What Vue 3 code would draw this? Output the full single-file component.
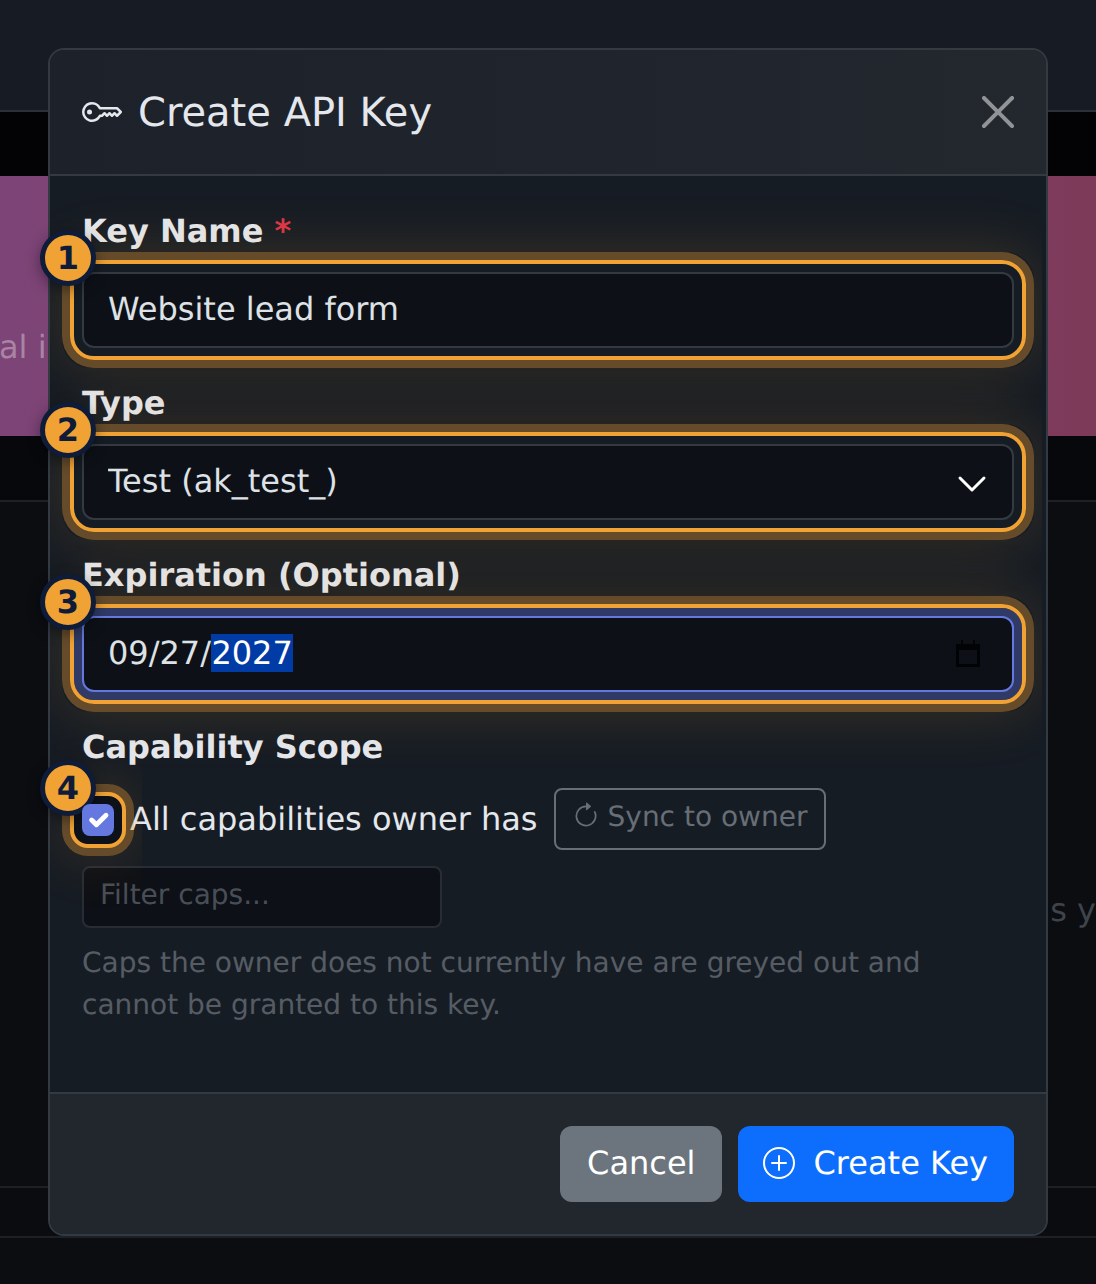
<template>
  <div class="page">
    <!-- Dimmed page behind the dialog -->
    <div class="bg-topbar"></div>
    <div class="bg-band"></div>
    <div class="bg-hero">
      <span>al i</span>
    </div>
    <div class="bg-band bg-band-low"></div>
    <div class="bg-content">
      <span>s y</span>
    </div>
    <div class="bg-row"></div>
    <div class="bg-bottom"></div>

    <div class="modal">
      <header class="modal-header">
        <h5 class="modal-title">
          <svg class="title-icon" viewBox="0 0 16 16" fill="currentColor">
            <path d="M0 8a4 4 0 0 1 7.465-2H14a.5.5 0 0 1 .354.146l1.5 1.5a.5.5 0 0 1 0 .708l-1.5 1.5a.5.5 0 0 1-.708 0L13 9.207l-.646.647a.5.5 0 0 1-.708 0L11 9.207l-.646.647a.5.5 0 0 1-.708 0L9 9.207l-.646.647A.5.5 0 0 1 8 10h-.535A4 4 0 0 1 0 8m4-3a3 3 0 1 0 2.712 4.285A.5.5 0 0 1 7.163 9h.63l.853-.854a.5.5 0 0 1 .708 0l.646.647.646-.647a.5.5 0 0 1 .708 0l.646.647.646-.647a.5.5 0 0 1 .708 0l.646.647.793-.793-1-1h-6.63a.5.5 0 0 1-.451-.285A3 3 0 0 0 4 5" />
            <path d="M4 8a1 1 0 1 1-2 0 1 1 0 0 1 2 0" />
          </svg>
          Create API Key
        </h5>
        <button class="btn-close" type="button" aria-label="Close">
          <svg viewBox="0 0 16 16" fill="#fff">
            <path d="M.293.293a1 1 0 0 1 1.414 0L8 6.586 14.293.293a1 1 0 1 1 1.414 1.414L9.414 8l6.293 6.293a1 1 0 0 1-1.414 1.414L8 9.414l-6.293 6.293a1 1 0 0 1-1.414-1.414L6.586 8 .293 1.707a1 1 0 0 1 0-1.414" />
          </svg>
        </button>
      </header>

      <div class="modal-body">
        <div class="field">
          <label class="form-label">Key Name <span class="required">*</span></label>
          <div class="control">
            <input class="form-control" type="text" value="Website lead form" />
            <div class="ring"><span class="badge">1</span></div>
          </div>
        </div>

        <div class="field">
          <label class="form-label">Type</label>
          <div class="control">
            <select class="form-control form-select">
              <option>Test (ak_test_)</option>
            </select>
            <svg class="chevron" viewBox="0 0 16 16" fill="none" stroke="#fff" stroke-width="1.5" stroke-linecap="round" stroke-linejoin="round">
              <path d="m2 5 6 6 6-6" />
            </svg>
            <div class="ring"><span class="badge">2</span></div>
          </div>
        </div>

        <div class="field">
          <label class="form-label">Expiration (Optional)</label>
          <div class="control">
            <div class="form-control date-input">09/27/<span class="selected">2027</span></div>
            <svg class="calendar" viewBox="0 0 24 28" fill="none">
              <path d="M1.5 6.5h21v20h-21z" stroke="#020304" stroke-width="3" />
              <path d="M0 5h24v6H0zM5 1h2v5H5zM17 1h2v5h-2z" fill="#020304" />
            </svg>
            <div class="ring"><span class="badge">3</span></div>
          </div>
        </div>

        <label class="form-label">Capability Scope</label>
        <div class="scope-row">
          <div class="check-wrap">
            <span class="checkbox">
              <svg viewBox="0 0 20 20" fill="none" stroke="#fff" stroke-width="3" stroke-linecap="round" stroke-linejoin="round">
                <path d="m6 10 3 3 6-6" />
              </svg>
            </span>
            <div class="ring ring-check"><span class="badge">4</span></div>
          </div>
          <span class="check-label">All capabilities owner has</span>
          <button class="btn-sync" type="button" disabled>
            <svg viewBox="0 0 16 16" fill="currentColor">
              <path fill-rule="evenodd" d="M8 3a5 5 0 1 0 4.546 2.914.5.5 0 0 1 .908-.417A6 6 0 1 1 8 2z" />
              <path d="M8 4.466V.534a.25.25 0 0 1 .41-.192l2.36 1.966c.12.1.12.284 0 .384L8.41 4.658A.25.25 0 0 1 8 4.466" />
            </svg>
            Sync to owner
          </button>
        </div>
        <input class="filter-input" type="text" placeholder="Filter caps..." />
        <p class="help-text">Caps the owner does not currently have are greyed out and cannot be granted to this key.</p>
      </div>

      <footer class="modal-footer">
        <button class="btn btn-secondary" type="button">Cancel</button>
        <button class="btn btn-primary" type="button">
          <svg viewBox="0 0 16 16" fill="currentColor">
            <path d="M8 15A7 7 0 1 1 8 1a7 7 0 0 1 0 14m0 1A8 8 0 1 0 8 0a8 8 0 0 0 0 16" />
            <path d="M8 4a.5.5 0 0 1 .5.5v3h3a.5.5 0 0 1 0 1h-3v3a.5.5 0 0 1-1 0v-3h-3a.5.5 0 0 1 0-1h3v-3A.5.5 0 0 1 8 4" />
          </svg>
          Create Key
        </button>
      </footer>
    </div>
  </div>
</template>

<script setup>
</script>

<style>
body {
  background: #0b0d11;
}
</style>

<style scoped>
* {
  box-sizing: border-box;
}

.page {
  position: relative;
  width: 1096px;
  height: 1284px;
  overflow: hidden;
  background: #0b0d11;
  font-family: "DejaVu Sans", sans-serif;
  font-size: 32px;
  line-height: 48px;
  color: #e4e7ec;
  text-rendering: geometricPrecision;
}

/* Background page */
.bg-topbar {
  height: 112px;
  background: #161b24;
  border-bottom: 2px solid #2b3039;
}

.bg-band {
  height: 64px;
  background: #030306;
}

.bg-band-low {
  height: 66px;
  background: #07080b;
  border-bottom: 2px solid #1d2025;
}

.bg-hero {
  height: 260px;
  padding-top: 147px;
  background: linear-gradient(90deg, #7d4477, #7e3a59);
  color: rgba(255, 255, 255, 0.35);
  white-space: nowrap;
}

.bg-hero span {
  display: block;
  margin-left: -1px;
}

.bg-content {
  height: 684px;
  padding-top: 384px;
  background: #0b0d11;
  color: #3f444b;
  text-align: right;
  white-space: nowrap;
}

.bg-row {
  height: 52px;
  background: #0a0c10;
  border-top: 2px solid #1d2025;
  border-bottom: 2px solid #1d2025;
}

.bg-bottom {
  height: 46px;
  background: #0b0d11;
}

/* Dialog */
.modal {
  position: absolute;
  top: 48px;
  left: 48px;
  width: 1000px;
  height: 1188px;
  display: flex;
  flex-direction: column;
  background: #161c24;
  border: 2px solid #343a42;
  border-radius: 16px;
}

.modal-header {
  display: flex;
  align-items: center;
  justify-content: space-between;
  height: 126px;
  padding: 0 32px;
  background: linear-gradient(90deg, #1c212a, #23282f);
  border-bottom: 2px solid #343a42;
  border-radius: 14px 14px 0 0;
}

.modal-title {
  display: flex;
  align-items: center;
  gap: 16px;
  margin: 2px 0 0;
  font-size: 40px;
  line-height: 60px;
  font-weight: 400;
}

.title-icon {
  width: 40px;
  height: 40px;
  margin-bottom: 2px;
}

.btn-close {
  width: 32px;
  height: 32px;
  padding: 0;
  background: none;
  border: 0;
  opacity: 0.5;
}

.btn-close svg {
  display: block;
  width: 32px;
  height: 32px;
}

.modal-body {
  flex: 1;
  padding: 31px 32px 32px;
}

.field {
  margin-bottom: 31px;
}

.form-label {
  display: block;
  margin-bottom: 17px;
  font-weight: 700;
  line-height: 48px;
}

.required {
  color: #dc3545;
}

.control {
  position: relative;
  height: 76px;
}

.form-control {
  display: block;
  width: 100%;
  height: 76px;
  padding: 0 24px 2px;
  background: #0d1117;
  border: 2px solid #343a40;
  border-radius: 12px;
  color: #dee2e6;
  font-family: inherit;
  font-size: 32px;
  line-height: 70px;
  outline: none;
  text-rendering: geometricPrecision;
}

.form-select {
  appearance: none;
}

.chevron {
  position: absolute;
  top: 24px;
  right: 26px;
  width: 32px;
  height: 32px;
}

.date-input {
  border-color: #6478e0;
  box-shadow: 0 0 0 8px #2f3a66;
}

.selected {
  display: inline-block;
  height: 38px;
  margin-left: 0.4px;
  line-height: 38px;
  background: #003ba6;
  color: #fff;
}

.calendar {
  position: absolute;
  top: 23px;
  right: 34px;
  width: 24px;
  height: 28px;
}

/* Highlight ring drawn over each control */
.ring {
  position: absolute;
  inset: -12px;
  border: 4px solid #f0a234;
  border-radius: 24px;
  box-shadow: 0 0 0 8px rgba(240, 162, 52, 0.36);
  pointer-events: none;
}

.ring::before {
  content: "";
  position: absolute;
  inset: -12px;
  border-radius: 28px;
  box-shadow: 0 0 60px rgba(240, 162, 52, 0.16);
  clip-path: inset(-70px -8px -70px -12px);
}

.badge {
  position: absolute;
  top: -34px;
  left: -34px;
  display: flex;
  align-items: center;
  justify-content: center;
  width: 56px;
  height: 56px;
  background: #f0a234;
  border: 5px solid #0e1c3a;
  border-radius: 50%;
  box-shadow: 0 4px 14px rgba(0, 0, 0, 0.4);
  color: #0e1c3a;
  font-size: 32px;
  font-weight: 700;
  line-height: 1;
}

/* Capability row */
.scope-row {
  display: flex;
  align-items: center;
  height: 62px;
  margin-top: 1px;
  margin-bottom: 16px;
}

.check-wrap {
  position: relative;
  width: 32px;
  height: 32px;
  margin-top: 2px;
  margin-right: 16px;
}

.checkbox {
  position: relative;
  z-index: 1;
  display: block;
  width: 32px;
  height: 32px;
  background: #6478e0;
  border-radius: 8px;
}

.checkbox svg {
  display: block;
  width: 32px;
  height: 32px;
}

.ring-check {
  border-radius: 18px;
  background: #0d1119;
}

.ring-check .badge {
  top: -36px;
}

.check-label {
  white-space: nowrap;
}

.btn-sync {
  display: flex;
  align-items: center;
  gap: 8px;
  height: 62px;
  margin-left: 16px;
  padding: 0 17px 6px 16px;
  background: none;
  border: 2px solid #676e76;
  border-radius: 8px;
  color: #676e76;
  font-family: inherit;
  font-size: 28px;
  white-space: nowrap;
  text-rendering: geometricPrecision;
}

.btn-sync svg {
  width: 28px;
  height: 28px;
}

.filter-input {
  display: block;
  width: 360px;
  height: 62px;
  padding: 0 16px 6px;
  background: #0d1016;
  border: 2px solid #282d35;
  border-radius: 8px;
  color: #dee2e6;
  font-family: inherit;
  font-size: 28px;
  outline: none;
  text-rendering: geometricPrecision;
}

.filter-input::placeholder {
  color: #484e56;
  opacity: 1;
}

.help-text {
  margin: 14px 0 0;
  color: #565c64;
  font-size: 28px;
  line-height: 42px;
}

.modal-footer {
  display: flex;
  justify-content: flex-end;
  gap: 16px;
  height: 142px;
  padding: 32px;
  background: #22272e;
  border-top: 2px solid #343a42;
  border-radius: 0 0 14px 14px;
}

.btn {
  display: flex;
  align-items: center;
  height: 76px;
  border: 0;
  border-radius: 12px;
  color: #fff;
  font-family: inherit;
  font-size: 32px;
  white-space: nowrap;
  text-rendering: geometricPrecision;
}

.btn svg {
  width: 32px;
  height: 32px;
}

.btn-secondary {
  padding: 0 27px 2px;
  background: #6c757d;
}

.btn-primary {
  gap: 18px;
  padding: 0 26px 2px 25px;
  background: #0d6efd;
}
</style>
